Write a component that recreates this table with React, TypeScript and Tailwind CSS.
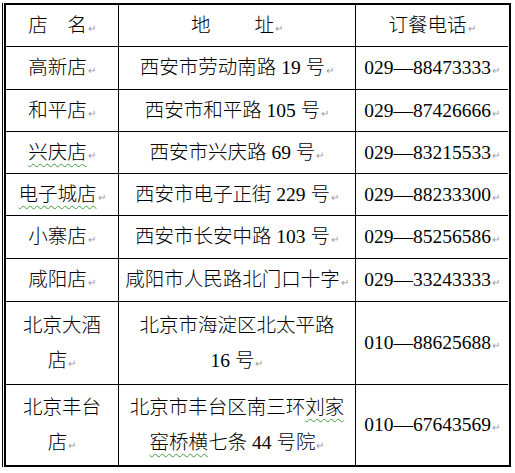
import React from 'react';

const font = { fontFamily: '"Liberation Serif", "Noto Sans CJK SC", serif' };

// paragraph mark shown after each cell's text
function Mark() {
  return (
    <span className="ml-[1px] text-[10px] leading-none align-baseline text-[#9a9a9a] font-['DejaVu_Sans',sans-serif]">
      ↵
    </span>
  );
}

function Wavy({ children }: { children: React.ReactNode }) {
  return (
    <span className="underline decoration-wavy decoration-[#3f9b3f] decoration-1 underline-offset-[4px]">
      {children}
    </span>
  );
}

type Row = {
  name: React.ReactNode;
  addr: React.ReactNode;
  phone: string;
  h: string;
  tall?: boolean;
};

const rows: Row[] = [
  { name: '高新店', addr: '西安市劳动南路 19 号', phone: '029—88473333', h: 'h-[43px]' },
  { name: '和平店', addr: '西安市和平路 105 号', phone: '029—87426666', h: 'h-[42px]' },
  { name: <Wavy>兴庆店</Wavy>, addr: '西安市兴庆路 69 号', phone: '029—83215533', h: 'h-[42px]' },
  { name: <Wavy>电子城店</Wavy>, addr: '西安市电子正街 229 号', phone: '029—88233300', h: 'h-[42px]' },
  { name: '小寨店', addr: '西安市长安中路 103 号', phone: '029—85256586', h: 'h-[43px]' },
  { name: '咸阳店', addr: '咸阳市人民路北门口十字', phone: '029—33243333', h: 'h-[43px]' },
  {
    name: (
      <>
        北京大酒
        <br />店
      </>
    ),
    addr: (
      <>
        北京市海淀区北太平路
        <br />16 号
      </>
    ),
    phone: '010—88625688',
    h: 'h-[83px]',
    tall: true,
  },
  {
    name: (
      <>
        北京丰台
        <br />店
      </>
    ),
    addr: (
      <>
        北京市丰台区南三环<Wavy>刘家</Wavy>
        <br />
        <Wavy>窑桥横</Wavy>七条 44 号院
      </>
    ),
    phone: '010—67643569',
    h: 'h-[80px]',
    tall: true,
  },
];

function Cell({
  children,
  className,
  tall,
}: {
  children: React.ReactNode;
  className: string;
  tall?: boolean;
}) {
  return (
    <div className={`flex items-center justify-center ${className}`}>
      <div className={`whitespace-nowrap text-center font-light ${tall ? 'leading-[35px]' : 'leading-[24px]'}`}>
        {children}
        <Mark />
      </div>
    </div>
  );
}

export default function App() {
  return (
    <div className="w-[515px] h-[473px] bg-white pl-[2px] pt-[3px] text-black" style={font}>
      <div className="w-[508px] border-l border-black pl-[1px] pt-[2px]">
        <div className="w-[507px] border-2 border-black text-[19.5px] -mt-[2px]">
          {/* header */}
          <div className="grid grid-cols-[113px_237px_152px] h-[42px]">
            <Cell className="border-r border-b border-black">店　名</Cell>
            <Cell className="border-r border-b border-black">地　　 址</Cell>
            <Cell className="border-b border-black">订餐电话</Cell>
          </div>
          {rows.map((r, i) => {
            const last = i === rows.length - 1;
            const b = last ? '' : 'border-b';
            return (
              <div key={i} className={`grid grid-cols-[113px_237px_152px] ${r.h}`}>
                <Cell tall={r.tall} className={`border-r ${b} border-black`}>
                  {r.name}
                </Cell>
                <Cell tall={r.tall} className={`border-r ${b} border-black`}>
                  {r.addr}
                </Cell>
                <Cell className={`${b} border-black`}>{r.phone}</Cell>
              </div>
            );
          })}
        </div>
      </div>
    </div>
  );
}
